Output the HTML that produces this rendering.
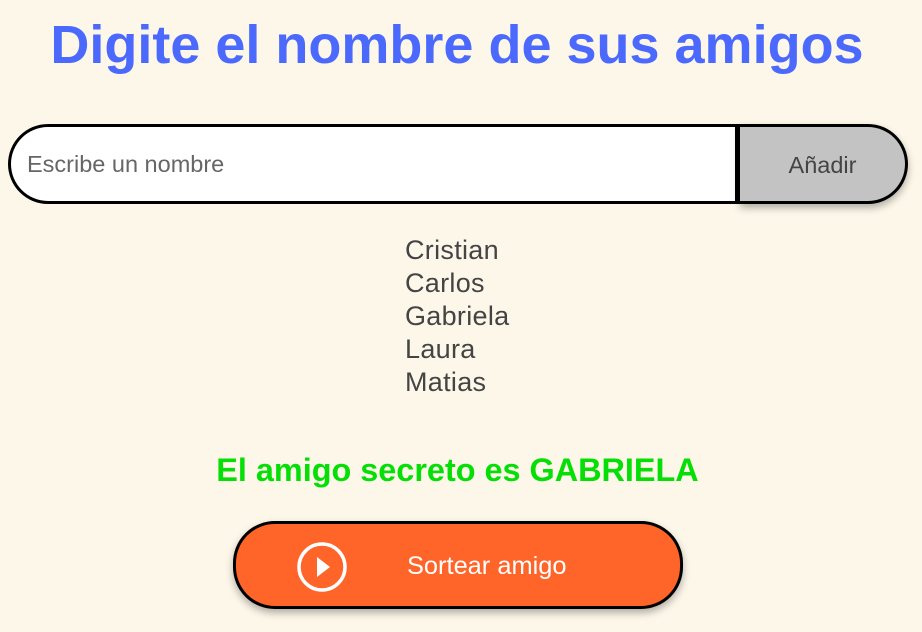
<!DOCTYPE html>
<html><head><meta charset="utf-8"><style>
body{margin:0;width:922px;height:632px;background:#fdf7ea;font-family:"Liberation Sans",sans-serif;position:relative;overflow:hidden}
h1{position:absolute;top:14px;left:0;width:914px;margin:0;text-align:center;font-size:54px;font-weight:bold;color:#4b69fd}
.inp{position:absolute;left:8px;top:124px;width:724px;height:74px;border:3px solid #000;border-right:5px solid #000;border-radius:40px 0 0 40px;background:#fff}
.inp span{position:absolute;left:16px;top:24px;font-size:23.5px;color:#666}
.add{position:absolute;left:740px;top:124px;width:165px;height:74px;border:3px solid #000;border-left:none;border-radius:0 40px 40px 0;background:#c3c3c3;box-shadow:0 4px 8px rgba(0,0,0,.3);font-size:23.5px;color:#444;text-align:center;line-height:76px}
.list{position:absolute;left:405px;top:234px;font-size:27px;line-height:33px;color:#444;letter-spacing:0.3px}
.res{position:absolute;top:452px;left:0;width:915px;text-align:center;font-size:32.4px;font-weight:bold;color:#05df05}
.btn{position:absolute;left:233px;top:521px;width:444px;height:82px;border:3px solid #000;border-radius:42px;background:#ff6429;box-shadow:0 4px 8px rgba(0,0,0,.3)}
.btn span{position:absolute;left:171px;top:28px;font-size:25.4px;color:#fff}
.btn svg{position:absolute;left:61px;top:18px}
</style></head><body>
<h1>Digite el nombre de sus amigos</h1>
<div class="inp"><span>Escribe un nombre</span></div>
<div class="add">Añadir</div>
<div class="list">Cristian<br>Carlos<br>Gabriela<br>Laura<br>Matias</div>
<div class="res">El amigo secreto es GABRIELA</div>
<div class="btn"><svg width="50" height="50" viewBox="0 0 50 50"><circle cx="25" cy="25" r="23" fill="none" stroke="#fff" stroke-width="3.5"/><path d="M20 15 L33 25 L20 35Z" fill="#fff"/></svg><span>Sortear amigo</span></div>
</body></html>
